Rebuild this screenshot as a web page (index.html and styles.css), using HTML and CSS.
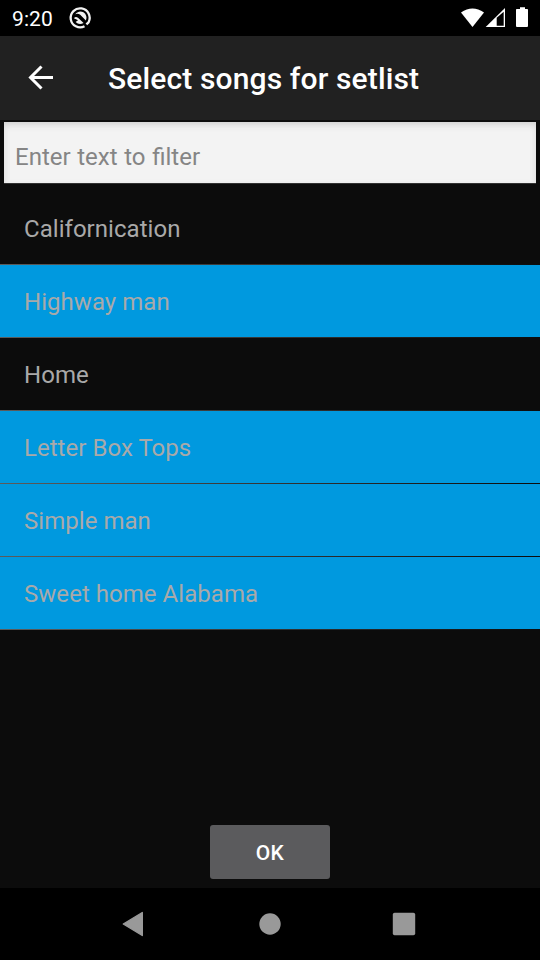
FILE: index.html
```html
<!DOCTYPE html>
<html lang="en">
<head>
<meta charset="utf-8">
<title>Select songs for setlist</title>
<link rel="stylesheet" href="styles.css">
</head>
<body>
<div class="status">
  <span class="clock">9:20</span>
  <svg class="notice" width="22" height="22" viewBox="0 0 22 22">
    <path d="M15.5 19.3A9.5 9.5 0 1 1 19.6 15.2L17.4 17.4" fill="none" stroke="#f2f2f2" stroke-width="2.3"/>
    <path d="M6.2 7.2A6.2 6.2 0 0 1 16.9 13.4L11.2 7.8Q9 6.2 6.2 7.2Z" fill="#f2f2f2"/>
    <path d="M4.9 11.3Q6.6 8.8 9 10.8L14.6 16Q10 18.3 6.6 15L9 13.2Z" fill="#f2f2f2"/>
  </svg>
  <svg class="signals" width="68" height="20" viewBox="0 0 68 20">
    <path d="M0 4.4Q11.5-3.6 23 4.4L11.5 19Z" fill="#fff"/>
    <path d="M24.7 19L44 0V19Z" fill="#fff"/>
    <path d="M35.7 9.8L42.7 3.7V17.7H35.7Z" fill="#000"/>
    <path d="M59 -.7h5v1.7h2.2q.8 0 .8.8V18q0 1-1 1H56q-1 0-1-1V1.8q0-.8.8-.8H59Z" fill="#fff"/>
  </svg>
</div>
<header class="bar">
  <svg class="back" width="24" height="24" viewBox="0 0 24 24"><path d="M24 12.5H2M12.5 1.5L1.5 12.5l11 11" fill="none" stroke="#fff" stroke-width="3"/></svg>
  <h1>Select songs for setlist</h1>
</header>
<main>
  <input class="filter" type="text" placeholder="Enter text to filter" aria-label="Filter songs">
  <ul class="songs">
    <li>Californication</li>
    <li class="selected">Highway man</li>
    <li>Home</li>
    <li class="selected">Letter Box Tops</li>
    <li class="selected">Simple man</li>
    <li class="selected">Sweet home Alabama</li>
  </ul>
  <button class="ok">OK</button>
</main>
<nav class="nav">
  <svg width="26" height="26" viewBox="0 0 26 26"><path d="M.3 13L19.3 1.5V24.5Z" fill="#999" stroke="#999" stroke-width="1.4" stroke-linejoin="round"/></svg>
  <svg width="26" height="26" viewBox="0 0 26 26"><circle cx="13" cy="13" r="10.7" fill="#999"/></svg>
  <svg width="26" height="26" viewBox="0 0 26 26"><rect x="1.8" y="1.8" width="22.4" height="22.4" rx="1.8" fill="#999"/></svg>
</nav>
</body>
</html>
```
FILE: styles.css
```css
* { box-sizing: border-box; }
body {
  margin: 0;
  width: 540px;
  height: 960px;
  display: flex;
  flex-direction: column;
  overflow: hidden;
  background: #0c0c0c;
  color: #fff;
  font-family: Roboto, sans-serif;
}
svg { overflow: visible; }
.status {
  height: 36px;
  flex: none;
  display: flex;
  align-items: center;
  padding: 0 11px 0 12px;
  background: #000;
}
.clock { width: 57px; font-size: 21px; line-height: 36px; padding-top: 1px; letter-spacing: .1px; }
.signals { margin: 0 0 0 auto; }
.bar {
  height: 84px;
  flex: none;
  display: flex;
  align-items: center;
  padding-left: 29px;
  background: #212121;
}
.back { flex: none; margin: 0 55px 2px 0; }
h1 { margin: 0; font-size: 30px; font-weight: 500; line-height: 36px; padding-top: 2px; letter-spacing: .13px; }
main {
  flex: 1;
  display: flex;
  flex-direction: column;
  padding: 2px 0 9px;
}
.filter {
  height: 61px;
  flex: none;
  margin: 0 4px;
  padding: 9px 11px 0;
  border: 0;
  outline: 0;
  border-radius: 0;
  background: #f3f3f3;
  box-shadow: inset 0 5px 9px -4px #c8c8c8, inset 0 2px 6px #e8e8e8, 0 1px 0 #333;
  font: 24px Roboto, sans-serif;
  word-spacing: .7px;
}
.filter::placeholder { color: #858585; opacity: 1; }
.songs { list-style: none; margin: 9px 0 0; padding: 0; }
.songs li {
  height: 73px;
  padding: 1px 0 0 24px;
  font-size: 24px;
  line-height: 73px;
  letter-spacing: .04px;
  color: #a9a9a9;
  background: linear-gradient(90deg, #5c5c5c, #0c0c0c) 0 100% / 100% 1px no-repeat;
}
.songs .selected {
  background: linear-gradient(90deg, #5c5c5c, #0c0c0c) 0 100% / 100% 1px no-repeat, #0099df;
}
.ok {
  width: 120px;
  height: 54px;
  margin: auto auto 0;
  padding: 2px 0 0;
  border: 0;
  border-radius: 3px;
  background: #5b5b5d;
  color: #fff;
  font: 500 21px Roboto, sans-serif;
  letter-spacing: .3px;
}
.nav {
  height: 72px;
  flex: none;
  display: flex;
  justify-content: center;
  align-items: center;
  gap: 108px;
  background: #000;
}
```
